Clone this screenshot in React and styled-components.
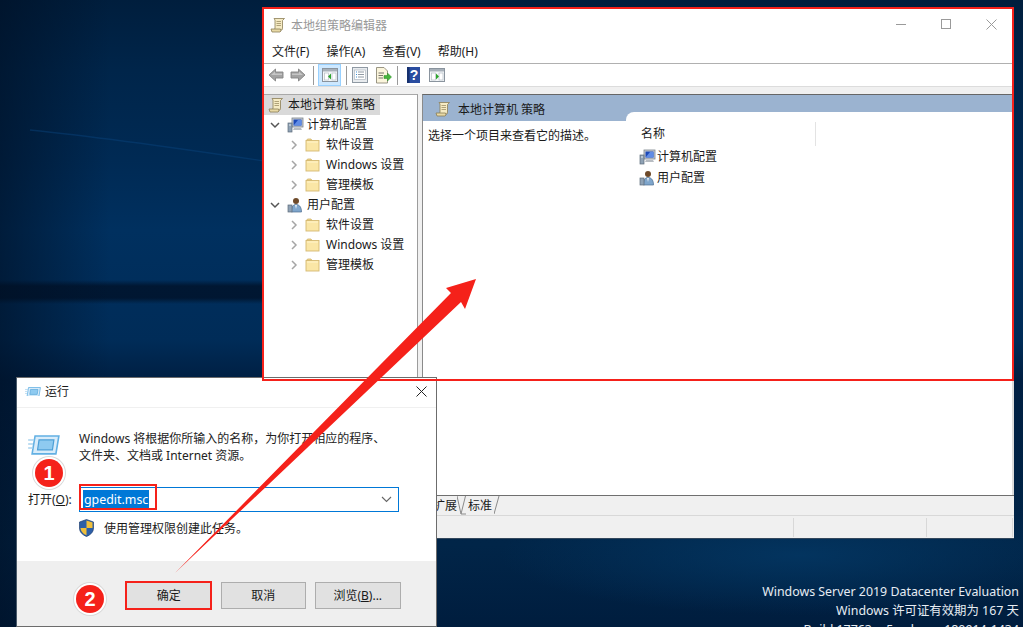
import React from "react";
import styled, { createGlobalStyle } from "styled-components";

const GlobalStyle = createGlobalStyle`
  html, body { margin: 0; padding: 0; background: #00264c; overflow: hidden; }
  * { box-sizing: border-box; }
`;

const uiFont = `"Noto Sans", "Noto Sans CJK SC", sans-serif`;

// Desktop
const Desktop = styled.div`
  position: relative;
  width: 1023px;
  height: 627px;
  overflow: hidden;
  font-family: ${uiFont};
  font-size: 12px;
  color: #1a1a1a;
  background:
    linear-gradient(180deg, rgba(0, 14, 34, 0) 280px, rgba(0, 14, 34, 0.72) 286px, rgba(0, 14, 34, 0.72) 298px, rgba(0, 14, 34, 0) 304px) 0 0 / 264px 100% no-repeat,
    radial-gradient(ellipse 300px 60px at 800px 555px, #03345f 0%, rgba(3, 52, 95, 0) 100%),
    linear-gradient(180deg, #001e3d 0, #00254a 70px, #002a54 160px, #00305f 230px, #002c58 340px, #001f42 380px, #012548 545px, #001d3e 627px),
    #00264c;
`;

const EdgeShade = styled.div`
  position: absolute;
  left: 0;
  top: 0;
  bottom: 0;
  width: 110px;
  background: linear-gradient(90deg, rgba(0, 15, 35, 0.6), rgba(0, 15, 35, 0));
`;

const WallpaperStreak = styled.svg`
  position: absolute;
  left: 0;
  top: 0;
  filter: blur(0.7px);
`;

const Watermark = styled.div`
  position: absolute;
  right: 4px;
  top: 582px;
  text-align: right;
  color: #e6ecf3;
  font-size: 12.4px;
  line-height: 19px;
  white-space: nowrap;
`;

// Group policy editor window
const EditorWindow = styled.div`
  position: absolute;
  left: 264px;
  top: 9px;
  width: 750px;
  height: 530px;
  display: flex;
  flex-direction: column;
  background: #fff;
  border-bottom: 1px solid #33475c;
`;

const TitleBar = styled.div`
  height: 32px;
  flex: none;
  display: flex;
  align-items: center;
  padding: 0 0 0 6px;
  gap: 5px;
  color: #999;
`;

const TitleText = styled.div`
  flex: 1;
  padding-top: 1px;
  line-height: 16px;
`;

const WindowControls = styled.div`
  display: flex;
  align-items: center;
  gap: 34px;
  padding-right: 17px;
  margin-bottom: 2px;
`;

const MenuBar = styled.div`
  height: 23px;
  flex: none;
  display: flex;
  align-items: center;
  gap: 17px;
  padding: 0 0 1px 8px;
  border-bottom: 1px solid #b0b0b0;
  line-height: 16px;
`;

const Toolbar = styled.div`
  height: 23px;
  flex: none;
  display: flex;
  align-items: center;
  padding-left: 4px;
  border-bottom: 1px solid #dcdcdc;
`;

const ToolSlot = styled.div`
  width: ${(p) => p.$w}px;
  height: 22px;
  flex: none;
  display: flex;
  align-items: center;
  justify-content: center;
  margin-right: ${(p) => p.$gap || 0}px;
  ${(p) => p.$active && "background: #cde8ff; border: 1px solid #99d1ff;"}
`;

const ToolSeparator = styled.div`
  width: 1px;
  height: 19px;
  flex: none;
  background: #9a9a9a;
  margin: 0 ${(p) => p.$right}px 0 ${(p) => p.$left}px;
`;

const PaneGap = styled.div`
  height: 7px;
  flex: none;
  background: #f0f0f0;
`;

const Panes = styled.div`
  flex: 1;
  min-height: 0;
  display: flex;
  background: #f0f0f0;
`;

const TreePane = styled.div`
  width: 154px;
  flex: none;
  background: #fff;
  border-right: 1px solid #9c9c9c;
  border-top: 1px solid #a8a8a8;
`;

const TreeRow = styled.div`
  height: 20px;
  display: flex;
  align-items: center;
  width: ${(p) => (p.$selected ? "116px" : "auto")};
  padding-left: ${(p) => p.$indent}px;
  background: ${(p) => (p.$selected ? "#d9d9d9" : "transparent")};
  line-height: 16px;
  white-space: nowrap;
`;

const Twisty = styled.span`
  width: 12px;
  flex: none;
  display: flex;
  align-items: center;
  justify-content: center;
  margin-right: ${(p) => p.$gap}px;
`;

const TreeIcon = styled.span`
  display: flex;
  flex: none;
  margin-right: ${(p) => p.$gap}px;
`;

const Splitter = styled.div`
  width: 4px;
  flex: none;
  background: #f0f0f0;
`;

const ResultPane = styled.div`
  flex: 1;
  display: grid;
  grid-template-columns: 203px 1fr;
  background: #fff;
  border-top: 1px solid #666;
  border-left: 1px solid #8a8a8a;
  border-right: 2px solid #dcdcdc;
`;

const DescColumn = styled.div`
  display: flex;
  flex-direction: column;
`;

const ResultHead = styled.div`
  height: 26px;
  flex: none;
  display: flex;
  align-items: center;
  gap: 7px;
  padding: 1px 0 0 12px;
  background: #9bb3d0;
`;

const Description = styled.div`
  padding: 7px 0 0 5px;
  line-height: 16px;
  white-space: nowrap;
`;

const ListColumn = styled.div`
  display: flex;
  flex-direction: column;
  padding-top: 17px;
  background: #9bb3d0;
`;

const ListBody = styled.div`
  flex: 1;
  background: #fff;
  border-top-left-radius: 8px;
  padding-top: 10px;
`;

const ColumnHead = styled.div`
  width: 190px;
  height: 24px;
  display: flex;
  align-items: center;
  padding-left: 15px;
  border-right: 1px solid #e3e3e3;
  line-height: 16px;
`;

const ListRow = styled.div`
  height: 21px;
  display: flex;
  align-items: center;
  gap: 1px;
  padding-left: 13px;
  line-height: 16px;
`;

const TabStrip = styled.div`
  height: 21px;
  flex: none;
  display: flex;
  align-items: flex-end;
  padding-left: 169px;
  background: #f0f0f0;
  border-top: 1px solid #6f6f6f;
  border-bottom: 1px solid #d8d8d8;
`;

const TabLabel = styled.div`
  width: ${(p) => p.$w}px;
  height: 20px;
  flex: none;
  display: flex;
  align-items: center;
  justify-content: center;
  padding-top: 1px;
  line-height: 16px;
  white-space: nowrap;
`;

const TabEdge = styled.svg`
  flex: none;
  display: block;
`;

const StatusBar = styled.div`
  height: 22px;
  flex: none;
  display: flex;
  justify-content: flex-end;
  background: #f0f0f0;
`;

const StatusCell = styled.div`
  width: ${(p) => p.$w}px;
  margin: 2px 0 1px;
  border-left: 1px solid #d8d8d8;
`;

// Run dialog
const RunDialog = styled.div`
  position: absolute;
  left: 16px;
  top: 377px;
  width: 421px;
  height: 250px;
  display: flex;
  flex-direction: column;
  background: #fff;
  border: 1px solid #6c6c6c;
  border-left-color: #4a5a6a;
`;

const DialogTitle = styled.div`
  height: 30px;
  flex: none;
  display: flex;
  align-items: center;
  gap: 4px;
  padding: 0 9px 2px 8px;
  border-bottom: 1px solid #f0f0f0;
  line-height: 16px;
`;

const Grow = styled.div`
  flex: 1;
`;

const DialogBody = styled.div`
  flex: 1;
  display: flex;
  flex-direction: column;
  padding: 22px 0 0 11px;
`;

const Prompt = styled.div`
  display: flex;
  height: 50px;
`;

const RunIconSlot = styled.div`
  width: 51px;
  flex: none;
  padding-top: 5px;
`;

const PromptText = styled.div`
  line-height: 17px;
  white-space: nowrap;
  color: #222;
`;

const OpenRow = styled.div`
  display: flex;
  align-items: center;
  margin-top: 7px;
  height: 25px;
`;

const OpenLabel = styled.div`
  width: 51px;
  flex: none;
  line-height: 16px;
  white-space: nowrap;
`;

const Key = styled.span`
  text-decoration: underline;
`;

const ComboBox = styled.div`
  width: 320px;
  height: 25px;
  display: flex;
  align-items: center;
  justify-content: space-between;
  padding: 0 6px 0 3px;
  border: 1px solid #0078d7;
`;

const SelectedText = styled.span`
  background: #0078d7;
  color: #fff;
  font-size: 12.4px;
  line-height: 19px;
  height: 19px;
  padding: 0 1px;
`;

const ElevationNote = styled.div`
  display: flex;
  align-items: center;
  gap: 10px;
  margin: 6px 0 0 51px;
  height: 19px;
  line-height: 16px;
`;

const NoteText = styled.span`
  margin-top: 2px;
`;

const DialogFooter = styled.div`
  height: 65px;
  flex: none;
  display: flex;
  align-items: flex-start;
  gap: 9px;
  padding: 21px 0 0 109px;
  background: #efefef;
`;

const DialogButton = styled.div`
  width: 85.5px;
  height: 27px;
  display: flex;
  align-items: center;
  justify-content: center;
  background: #e1e1e1;
  border: 1px solid ${(p) => (p.$primary ? "#0078d7" : "#adadad")};
  line-height: 16px;
`;

// Annotations on top of the screenshot
const Highlight = styled.div`
  position: absolute;
  left: ${(p) => p.$x}px;
  top: ${(p) => p.$y}px;
  width: ${(p) => p.$w}px;
  height: ${(p) => p.$h}px;
  border: 2px solid #f5211a;
  pointer-events: none;
`;

const StepBadge = styled.div`
  position: absolute;
  left: ${(p) => p.$x - 14}px;
  top: ${(p) => p.$y - 14}px;
  width: 28px;
  height: 28px;
  border-radius: 50%;
  display: flex;
  align-items: center;
  justify-content: center;
  background: #f5211a;
  box-shadow: 0 0 0 2px #fff, 0 0 0 3px #d9d9d9;
  color: #fff;
  font-family: "Liberation Sans", sans-serif;
  font-weight: 700;
  font-size: 20px;
  line-height: 28px;
`;

const ArrowLayer = styled.svg`
  position: absolute;
  left: 0;
  top: 0;
  pointer-events: none;
`;

// Icons
const Chevron = ({ open }) => (
  <svg width="10" height="10" viewBox="0 0 10 10">
    <path
      d={open ? "M1 3 L5 7 L9 3" : "M3 1 L7 5 L3 9"}
      fill="none"
      stroke={open ? "#555" : "#a6a6a6"}
      strokeWidth="1.5"
    />
  </svg>
);

const ScrollIcon = () => (
  <svg width="16" height="16" viewBox="0 0 16 16">
    <path d="M4 1.5 H14.5 L12.5 3.5 V11 L12 13 H4.5 L5 11 V3 Z" fill="#f6ebc4" stroke="#8c7d55" strokeWidth="0.8" />
    <path d="M1 12 H10.5 L11 14 L10 15 H2 Z" fill="#e8d9a6" stroke="#8c7d55" strokeWidth="0.8" />
    <path d="M6.5 4.5 H11 M6.5 6.5 H11 M6.5 8.5 H11" stroke="#a89a70" strokeWidth="0.9" />
  </svg>
);

const ComputerIcon = () => (
  <svg width="17" height="16" viewBox="0 0 17 16">
    <rect x="5" y="1" width="11" height="9" fill="#c7ccd2" stroke="#7b838c" strokeWidth="0.8" />
    <rect x="6.5" y="2.5" width="8" height="6" fill="#1c49b8" />
    <path d="M6.5 8.5 L11 3 L14.5 3 V8.5 Z" fill="#5f8be6" />
    <path d="M7 11 H14 L15 13 H6 Z" fill="#b7bcc2" />
    <rect x="1" y="6" width="4" height="9" fill="#8fa2b5" stroke="#5c6b7a" strokeWidth="0.7" />
    <rect x="2" y="7.5" width="2" height="1" fill="#e4eaf0" />
  </svg>
);

const UserIcon = () => (
  <svg width="17" height="16" viewBox="0 0 17 16">
    <circle cx="9" cy="4" r="3" fill="#6e4a2a" />
    <path d="M4.5 15 C4.5 9 6.5 7.5 9 7.5 C11.5 7.5 14.5 9 14.5 15 Z" fill="#7fa6cc" stroke="#4d6d8f" strokeWidth="0.7" />
    <rect x="1" y="8" width="4" height="7" fill="#8fa2b5" stroke="#5c6b7a" strokeWidth="0.7" />
    <path d="M8 8 L9 12 L10 8 Z" fill="#e9eff5" />
  </svg>
);

const FolderIcon = () => (
  <svg width="15" height="14" viewBox="0 0 15 14">
    <path d="M1.5 2.5 L2.5 1 H6 L7 2.5 Z" fill="#f3d98d" stroke="#cfb26a" strokeWidth="0.8" />
    <rect x="1" y="2.5" width="13" height="10.5" fill="#fae6a6" stroke="#d4b971" strokeWidth="0.9" />
    <rect x="2" y="3.5" width="11" height="1" fill="#fff3cc" />
  </svg>
);

const NavArrow = ({ flip }) => (
  <svg width="16" height="14" viewBox="0 0 16 14" style={flip ? { transform: "scaleX(-1)" } : undefined}>
    <path d="M1 7 L7.5 1 V4 H15 V10 H7.5 V13 Z" fill="#a3a3a3" stroke="#858585" strokeWidth="0.9" />
    <path d="M3 7 L7 3.5 V5.5 H14 V7 Z" fill="#c6c6c6" />
  </svg>
);

const PanelIcon = ({ left }) => (
  <svg width="16" height="14" viewBox="0 0 16 14">
    <rect x="0.5" y="0.5" width="15" height="13" fill="#f5f7f9" stroke="#8a949e" />
    <rect x="1" y="1" width="14" height="2.5" fill="#a7b0b9" />
    <rect x="2.5" y="5" width="4" height="7" fill="#fff" stroke="#b5bdc5" strokeWidth="0.7" />
    <rect x="10" y="5" width="4" height="7" fill="#fff" stroke="#b5bdc5" strokeWidth="0.7" />
    <path d={left ? "M9 5.5 V11.5 L6 8.5 Z" : "M7 5.5 V11.5 L10 8.5 Z"} fill="#2ca52c" />
  </svg>
);

const ListIcon = () => (
  <svg width="16" height="16" viewBox="0 0 16 16">
    <rect x="0.5" y="0.5" width="15" height="15" fill="#e8ebee" stroke="#8f99a3" />
    <rect x="2.5" y="3" width="11" height="9.5" fill="#fff" stroke="#b0b8c0" strokeWidth="0.7" />
    <path d="M4 5 H5 M4 7.5 H5 M4 10 H5" stroke="#3d8fd6" strokeWidth="1.2" />
    <path d="M6 5 H12 M6 7.5 H12 M6 10 H12" stroke="#8f99a3" />
  </svg>
);

const ExportIcon = () => (
  <svg width="17" height="17" viewBox="0 0 17 17">
    <path d="M1.5 0.5 H9 L12.5 4 V16 H1.5 Z" fill="#fbf5dc" stroke="#8e8a78" strokeWidth="0.9" />
    <path d="M3.5 6 H9 M3.5 8.5 H8 M3.5 11 H8" stroke="#77736a" />
    <path d="M9 8.5 H12.5 V6 L16.5 10 L12.5 14 V11.5 H9 Z" fill="#46b53c" stroke="#2b8a26" strokeWidth="0.5" />
  </svg>
);

const HelpIcon = () => (
  <svg width="13" height="16" viewBox="0 0 13 16">
    <rect width="13" height="16" fill="#2a4da0" />
    <rect x="0" y="0" width="2.5" height="16" fill="#16306e" />
    <text x="7" y="13" textAnchor="middle" fontFamily="Liberation Sans" fontWeight="700" fontSize="14" fill="#fff">?</text>
  </svg>
);

const RunIcon = ({ size = 32 }) => (
  <svg width={size} height={size * 0.62} viewBox="0 0 32 20">
    <path d="M7 1 H31 L28 19 H4 Z" fill="#d8ecfa" stroke="#62b0e3" strokeWidth="1.6" />
    <path d="M11 5 H26 L24.5 15 H9.5 Z" fill="#8ecaf0" stroke="#4c9fd6" strokeWidth="1.2" />
    <path d="M0 5 H6 M0 9 H5 M0 13 H4.5" stroke="#a9d3ee" strokeWidth="1.5" />
  </svg>
);

const ShieldIcon = () => (
  <svg width="15" height="18" viewBox="0 0 15 18">
    <path d="M7.5 0.5 L14.5 3 V9 C14.5 13.5 11 16 7.5 17.5 C4 16 0.5 13.5 0.5 9 V3 Z" fill="#2c5fa8" stroke="#1f3f70" strokeWidth="0.7" />
    <path d="M7.5 1.5 L13.5 3.5 V9 H7.5 Z" fill="#f0bf3a" />
    <path d="M7.5 9 H1.5 C1.8 12.7 4.6 15 7.5 16.3 Z" fill="#f0bf3a" />
  </svg>
);

const treeRows = [
  { level: 1, icon: "computer", label: "计算机配置" },
  { level: 2, label: "软件设置" },
  { level: 2, label: "Windows 设置" },
  { level: 2, label: "管理模板" },
  { level: 1, icon: "user", label: "用户配置" },
  { level: 2, label: "软件设置" },
  { level: 2, label: "Windows 设置" },
  { level: 2, label: "管理模板" },
];

function TreeItem({ level, icon, label }) {
  if (level === 1) {
    return (
      <TreeRow $indent={5}>
        <Twisty $gap={6}><Chevron open /></Twisty>
        <TreeIcon $gap={3}>{icon === "computer" ? <ComputerIcon /> : <UserIcon />}</TreeIcon>
        {label}
      </TreeRow>
    );
  }
  return (
    <TreeRow $indent={24}>
      <Twisty $gap={5}><Chevron /></Twisty>
      <TreeIcon $gap={6}><FolderIcon /></TreeIcon>
      {label}
    </TreeRow>
  );
}

function App() {
  return (
    <Desktop>
      <GlobalStyle />
      <EdgeShade />
      <WallpaperStreak width="264" height="200">
        <path d="M30 130 C110 138 190 150 264 161" fill="none" stroke="#08457f" strokeWidth="1.5" opacity="0.45" />
      </WallpaperStreak>

      <Watermark>
        <div>Windows Server 2019 Datacenter Evaluation</div>
        <div>Windows 许可证有效期为 167 天</div>
        <div>Build 17763.rs5_release.180914-1434</div>
      </Watermark>

      <EditorWindow>
        <TitleBar>
          <ScrollIcon />
          <TitleText>本地组策略编辑器</TitleText>
          <WindowControls>
            <svg width="11" height="11" viewBox="0 0 11 11"><path d="M0 5.5 H10" stroke="#9a9a9a" /></svg>
            <svg width="11" height="11" viewBox="0 0 11 11"><rect x="0.5" y="0.5" width="9" height="9" fill="none" stroke="#9a9a9a" /></svg>
            <svg width="11" height="11" viewBox="0 0 11 11"><path d="M0.5 0.5 L10.5 10.5 M10.5 0.5 L0.5 10.5" stroke="#9a9a9a" /></svg>
          </WindowControls>
        </TitleBar>

        <MenuBar>
          <span>文件(F)</span>
          <span>操作(A)</span>
          <span>查看(V)</span>
          <span>帮助(H)</span>
        </MenuBar>

        <Toolbar>
          <ToolSlot $w={16} $gap={6}><NavArrow /></ToolSlot>
          <ToolSlot $w={16}><NavArrow flip /></ToolSlot>
          <ToolSeparator $left={7} $right={4} />
          <ToolSlot $w={23} $active><PanelIcon left /></ToolSlot>
          <ToolSeparator $left={5} $right={5} />
          <ToolSlot $w={16} $gap={7}><ListIcon /></ToolSlot>
          <ToolSlot $w={17}><ExportIcon /></ToolSlot>
          <ToolSeparator $left={5} $right={9} />
          <ToolSlot $w={13} $gap={9}><HelpIcon /></ToolSlot>
          <ToolSlot $w={16}><PanelIcon /></ToolSlot>
        </Toolbar>

        <PaneGap />

        <Panes>
          <TreePane>
            <TreeRow $indent={4} $selected>
              <TreeIcon $gap={4}><ScrollIcon /></TreeIcon>
              本地计算机 策略
            </TreeRow>
            {treeRows.map((row, i) => (
              <TreeItem key={i} {...row} />
            ))}
          </TreePane>
          <Splitter />
          <ResultPane>
            <DescColumn>
              <ResultHead>
                <ScrollIcon />
                本地计算机 策略
              </ResultHead>
              <Description>选择一个项目来查看它的描述。</Description>
            </DescColumn>
            <ListColumn>
              <ListBody>
                <ColumnHead>名称</ColumnHead>
                <ListRow><ComputerIcon />计算机配置</ListRow>
                <ListRow><UserIcon />用户配置</ListRow>
              </ListBody>
            </ListColumn>
          </ResultPane>
        </Panes>

        <TabStrip>
          <TabLabel $w={24}>扩展</TabLabel>
          <TabEdge width="9" height="20" viewBox="0 0 9 20">
            <path d="M0 1 L4 19 H9 M4 19 L8.5 1" fill="none" stroke="#8a8a8a" />
          </TabEdge>
          <TabLabel $w={28}>标准</TabLabel>
          <TabEdge width="6" height="20" viewBox="0 0 6 20">
            <path d="M0 19 L5 1" fill="none" stroke="#8a8a8a" />
          </TabEdge>
        </TabStrip>

        <StatusBar>
          <StatusCell $w={133} />
          <StatusCell $w={86} />
          <StatusCell $w={2} />
        </StatusBar>
      </EditorWindow>

      <RunDialog>
        <DialogTitle>
          <RunIcon size={16} />
          运行
          <Grow />
          <svg width="11" height="11" viewBox="0 0 11 11"><path d="M0.5 0.5 L10.5 10.5 M10.5 0.5 L0.5 10.5" stroke="#222" /></svg>
        </DialogTitle>

        <DialogBody>
          <Prompt>
            <RunIconSlot><RunIcon /></RunIconSlot>
            <PromptText>
              Windows 将根据你所输入的名称，为你打开相应的程序、
              <br />
              文件夹、文档或 Internet 资源。
            </PromptText>
          </Prompt>
          <OpenRow>
            <OpenLabel>打开(<Key>O</Key>):</OpenLabel>
            <ComboBox>
              <SelectedText>gpedit.msc</SelectedText>
              <svg width="11" height="7" viewBox="0 0 11 7"><path d="M1 1 L5.5 5.5 L10 1" fill="none" stroke="#666" strokeWidth="1.1" /></svg>
            </ComboBox>
          </OpenRow>
          <ElevationNote>
            <ShieldIcon />
            <NoteText>使用管理权限创建此任务。</NoteText>
          </ElevationNote>
        </DialogBody>

        <DialogFooter>
          <DialogButton $primary>确定</DialogButton>
          <DialogButton>取消</DialogButton>
          <DialogButton>浏览(<Key>B</Key>)...</DialogButton>
        </DialogFooter>
      </RunDialog>

      <ArrowLayer width="1023" height="627" viewBox="0 0 1023 627">
        <path d="M175 573 L451 293 L446 288 L476 279 L465 309 L461 302 Z" fill="#f5211a" />
      </ArrowLayer>

      <Highlight $x={262} $y={7} $w={752} $h={374} />
      <Highlight $x={79} $y={484} $w={78} $h={26} />
      <Highlight $x={125} $y={581} $w={87} $h={29} />
      <StepBadge $x={49} $y={473}>1</StepBadge>
      <StepBadge $x={90} $y={599}>2</StepBadge>
    </Desktop>
  );
}

export default App;
